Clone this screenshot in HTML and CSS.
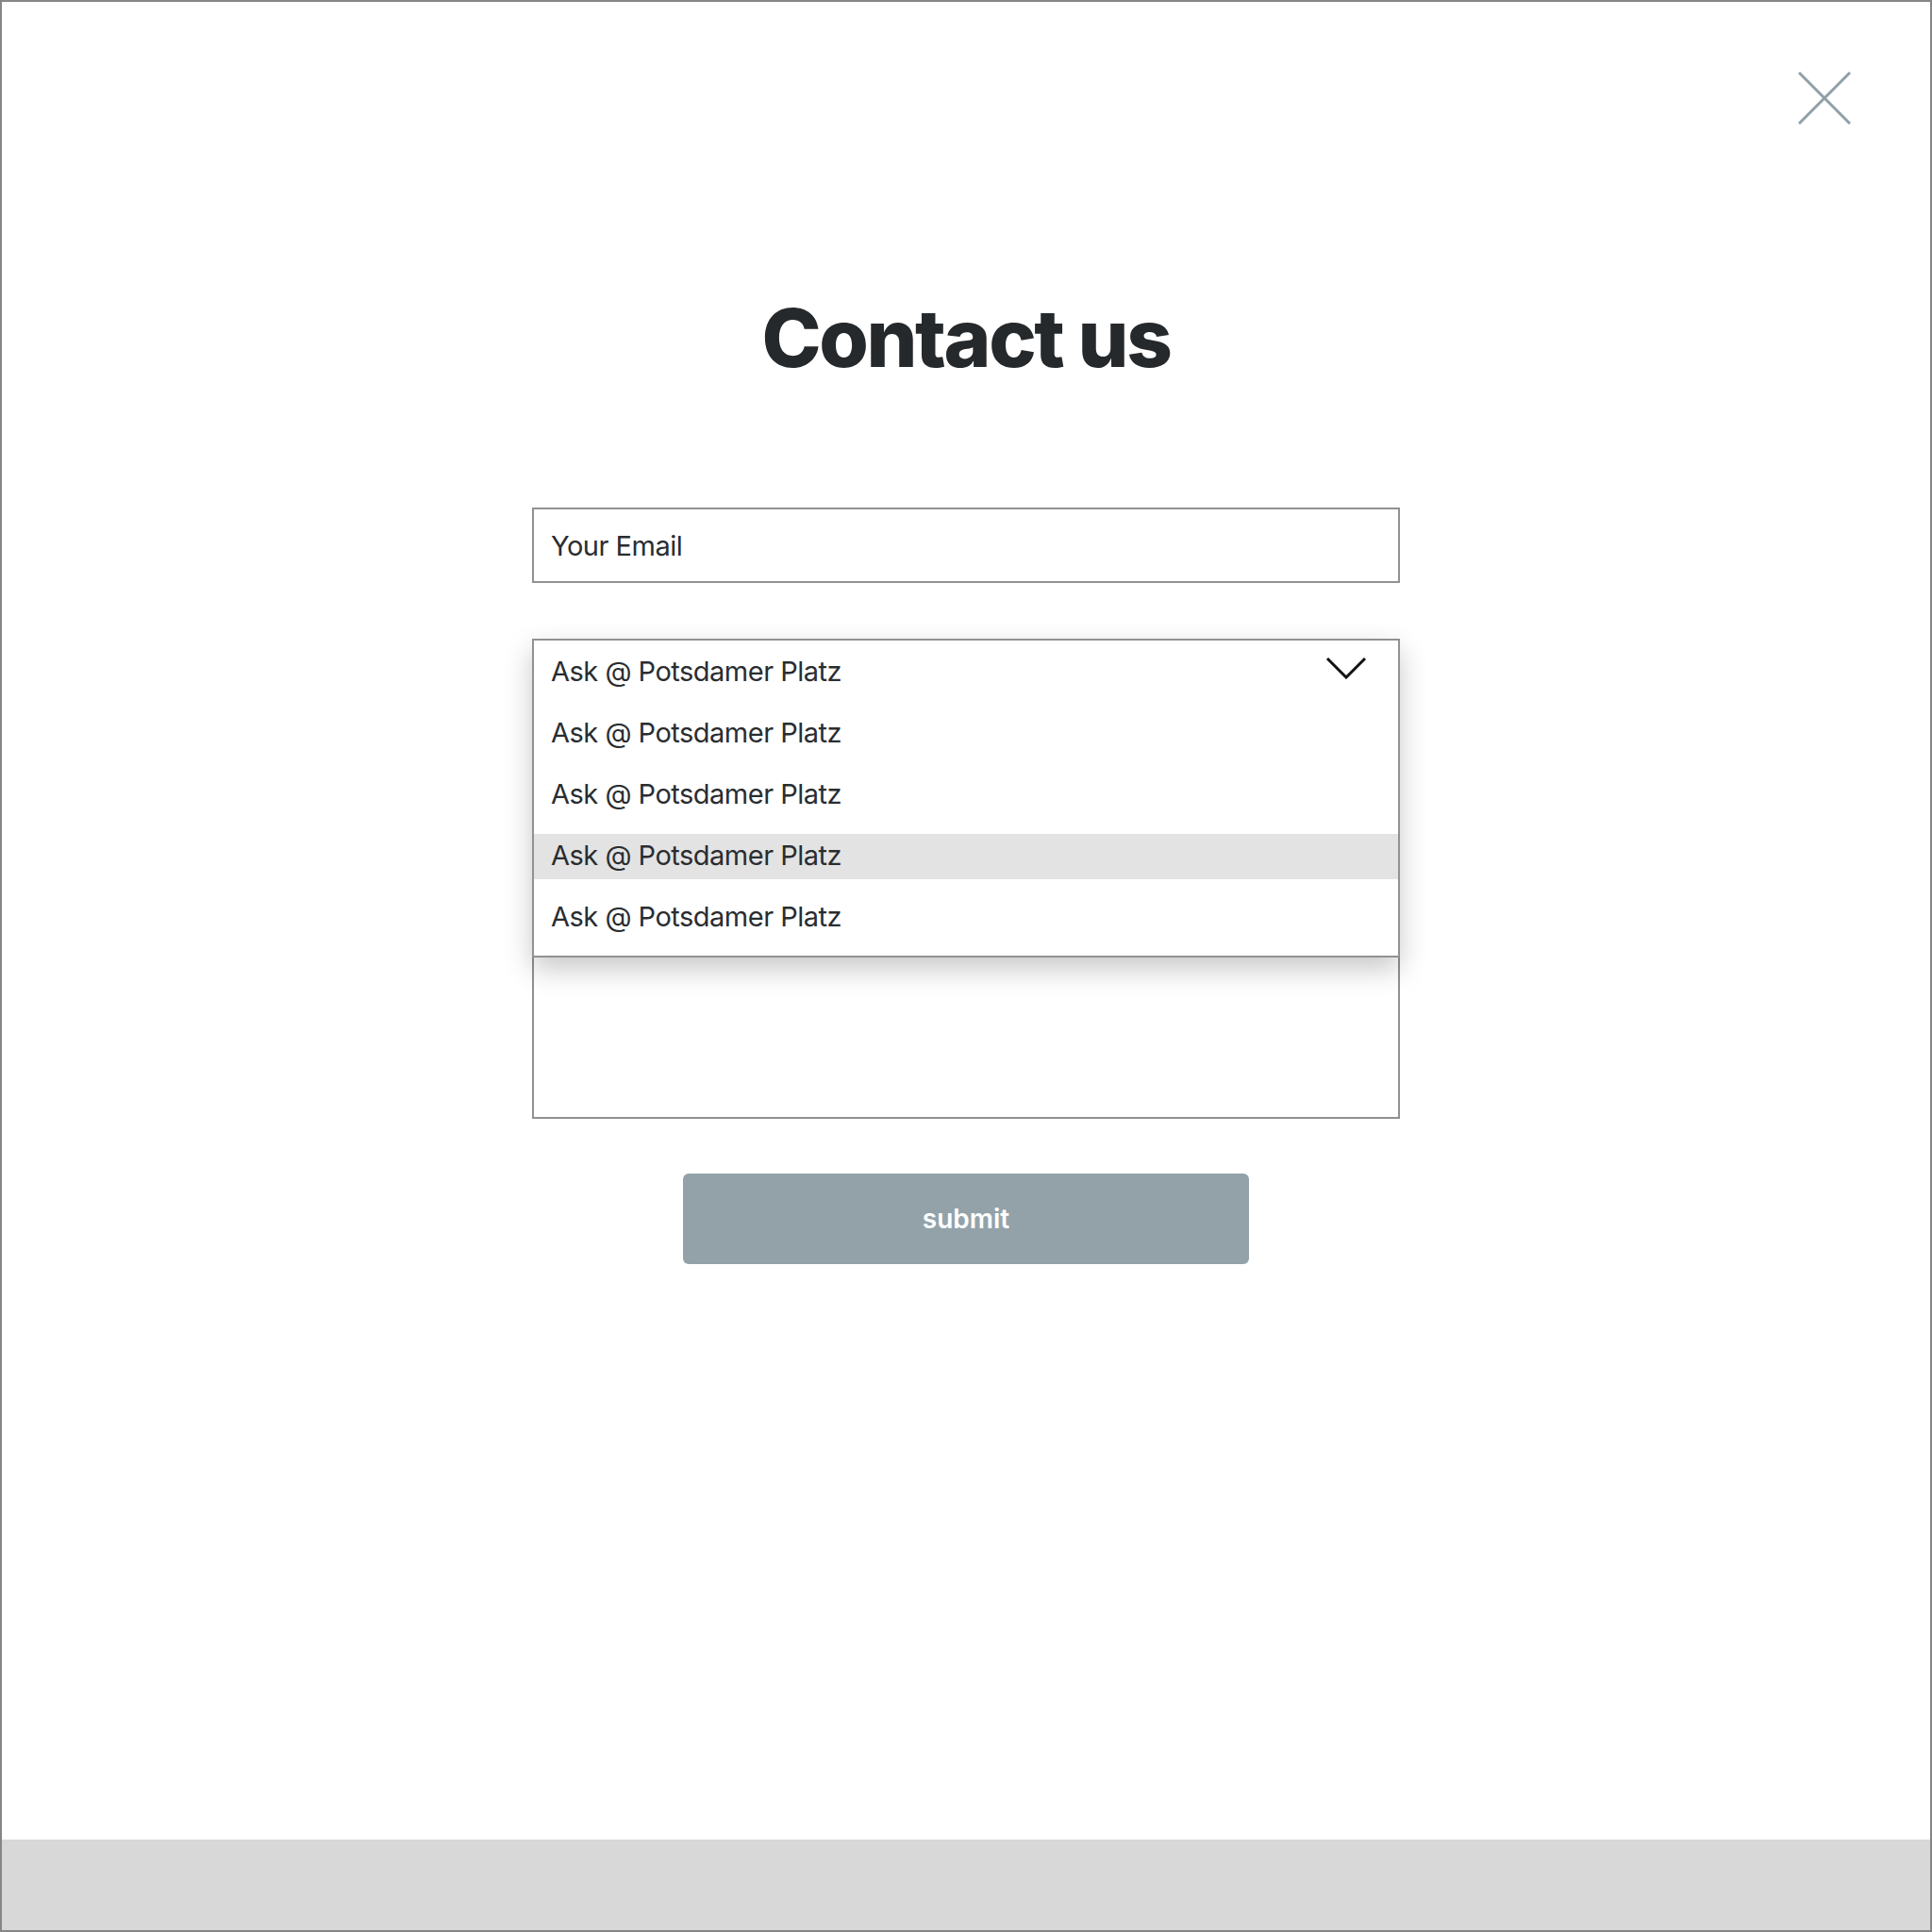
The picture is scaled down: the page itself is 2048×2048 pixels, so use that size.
FILE: index.html
```html
<!DOCTYPE html>
<html lang="en">
<head>
<meta charset="utf-8">
<title>Contact us</title>
<link rel="stylesheet" href="styles.css">
</head>
<body>
<div class="frame">
  <header class="topbar">
    <button class="close" aria-label="Close">
      <svg viewBox="0 0 56 56" width="56" height="56"><line x1="1" y1="1" x2="55" y2="55"/><line x1="55" y1="1" x2="1" y2="55"/></svg>
    </button>
  </header>
  <main class="content">
    <h1 class="title">Contact us</h1>
    <form class="form">
      <div class="field input">Your Email</div>
      <div class="select-wrap">
        <div class="field select" aria-hidden="true"></div>
        <div class="dropdown">
          <div class="option first">
            <span>Ask @ Potsdamer Platz</span>
            <svg class="chevron" viewBox="0 0 44 24" width="44" height="24"><polyline points="2,2 22,22 42,2"/></svg>
          </div>
          <div class="option"><span>Ask @ Potsdamer Platz</span></div>
          <div class="option"><span>Ask @ Potsdamer Platz</span></div>
          <div class="option active"><span>Ask @ Potsdamer Platz</span></div>
          <div class="option"><span>Ask @ Potsdamer Platz</span></div>
        </div>
      </div>
      <div class="field textarea"></div>
      <button type="button" class="submit">submit</button>
    </form>
  </main>
  <footer class="bottombar"></footer>
</div>
</body>
</html>
```

FILE: styles.css
```css
* { box-sizing: border-box; }
html, body { margin: 0; padding: 0; background: #fff; }
body { font-family: Inter, "Noto Sans", sans-serif; color: #2a2d30; }

.frame {
  width: 2048px;
  height: 2048px;
  border: 2px solid #868686;
  display: flex;
  flex-direction: column;
  background: #fff;
}

.topbar {
  display: flex;
  justify-content: flex-end;
  padding: 74px 84px 0 0;
}
.close {
  width: 56px;
  height: 56px;
  padding: 0;
  border: 0;
  background: none;
  display: block;
}
.close svg { display: block; stroke: #8fa0a7; stroke-width: 3; }

.content {
  flex: 1;
  display: flex;
  flex-direction: column;
  align-items: center;
}

.title {
  margin: 184px 0 0;
  font-size: 85px;
  line-height: 85px;
  font-weight: 800;
  letter-spacing: -2.4px;
  color: #25292c;
}

.form {
  width: 920px;
  margin-top: 137px;
  display: flex;
  flex-direction: column;
  align-items: center;
}

.field {
  width: 100%;
  border: 2px solid #919191;
  background: #fff;
}
.input, .select {
  height: 80px;
  display: flex;
  align-items: center;
  padding-left: 18px;
  font-size: 29px;
  letter-spacing: -0.5px;
  color: #2a2d30;
}
.select-wrap {
  width: 100%;
  position: relative;
  margin-top: 59px;
}
.dropdown {
  position: absolute;
  top: 0;
  left: 0;
  right: 0;
  z-index: 2;
  border: 2px solid #919191;
  background: #fff;
  padding: 10px 0 16px;
  display: flex;
  flex-direction: column;
  gap: 17px;
  box-shadow: 0 12px 28px rgba(0, 0, 0, 0.22);
}
.option {
  height: 48px;
  display: flex;
  align-items: center;
  justify-content: space-between;
  padding: 0 33px 3px 18px;
  font-size: 29px;
  letter-spacing: -0.5px;
  color: #2a2d30;
}
.option.active { background: #e3e3e3; }
.chevron {
  display: block;
  fill: none;
  stroke: #111;
  stroke-width: 3;
  margin-top: -7px;
}

.textarea {
  height: 371px;
  margin-top: 58px;
}

.submit {
  margin-top: 58px;
  width: 600px;
  height: 96px;
  border: 0;
  border-radius: 6px;
  background: #93a2a9;
  color: #fff;
  font-family: Inter, "Noto Sans", sans-serif;
  font-size: 28px;
  font-weight: 600;
}

.bottombar {
  height: 96px;
  background: #d8d8d8;
}
```
